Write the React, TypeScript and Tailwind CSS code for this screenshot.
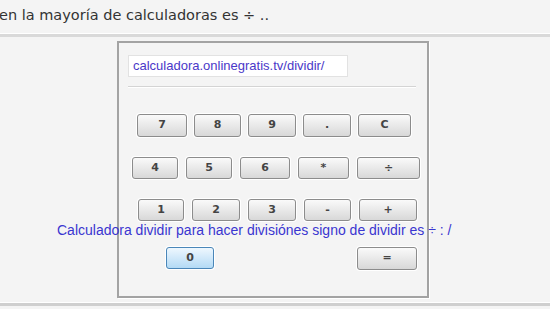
import React from 'react';

type Key = { label: string; w: number };

const rows: { ml: number; gap: number; h: number; keys: Key[] }[] = [
  { ml: 18, gap: 7, h: 23, keys: [{ label: '7', w: 50 }, { label: '8', w: 47 }, { label: '9', w: 48 }, { label: '.', w: 48 }, { label: 'C', w: 53 }] },
  { ml: 13, gap: 8, h: 22, keys: [{ label: '4', w: 46 }, { label: '5', w: 46 }, { label: '6', w: 50 }, { label: '*', w: 51 }, { label: '÷', w: 63 }] },
  { ml: 19, gap: 8, h: 22, keys: [{ label: '1', w: 46 }, { label: '2', w: 48 }, { label: '3', w: 48 }, { label: '-', w: 47 }, { label: '+', w: 58 }] },
];

function CalcKey({ label, w, h, blue }: { label: string; w: number; h: number; blue?: boolean }) {
  return (
    <button
      style={{ width: w, height: h }}
      className={
        blue
          ? 'rounded-[3px] border border-[#4a86b8] bg-gradient-to-b from-[#eef7fe] to-[#b3daf5] text-[11px] font-bold text-[#444] shadow-[0_0_0_1px_#fff] font-["DejaVu_Sans",sans-serif]'
          : 'rounded-[3px] border border-[#8c8c8c] bg-gradient-to-b from-[#fafafa] to-[#d8d8d8] text-[11px] font-bold text-[#444] shadow-[0_0_0_1px_#fff] font-["DejaVu_Sans",sans-serif]'
      }
    >
      {label}
    </button>
  );
}

export default function App() {
  return (
    <div className="w-[550px] h-[309px] overflow-hidden bg-[#f4f4f4]">
      <div className="h-[33px] pt-[6px] text-[14.5px] leading-[18px] text-[#333] font-['DejaVu_Sans',sans-serif] whitespace-nowrap -ml-[1px]">
        en la mayoría de calculadoras es ÷ ..
      </div>
      <div className="h-[1px] bg-white" />
      <div className="h-[3px] bg-[#d9d9d9]" />

      <div className="relative ml-[117px] mt-[4px] h-[257px] w-[312px] border-2 border-[#a3a3a3] shadow-[1px_1px_0_#fff]">
        <div className="ml-[9px] mt-[12px] flex h-[22px] w-[220px] items-center border border-[#e2e2e2] bg-white px-[4px] text-[13px] text-[#4a38c8] font-['Liberation_Sans',sans-serif]">
          calculadora.onlinegratis.tv/dividir/
        </div>
        <div className="ml-[9px] mt-[9px] h-[2px] w-[288px] border-t border-[#d4d4d4] bg-white" />

        <div className="mt-[26px] flex flex-col gap-[20px]">
          {rows.map((r, i) => (
            <div key={i} className="flex" style={{ marginLeft: r.ml, gap: r.gap }}>
              {r.keys.map((k) => (
                <CalcKey key={k.label} label={k.label} w={k.w} h={r.h} />
              ))}
            </div>
          ))}
          <div className="mt-[2px] flex">
            <div className="ml-[47px]">
              <CalcKey label="0" w={48} h={22} blue />
            </div>
            <div className="ml-[143px]">
              <CalcKey label="=" w={60} h={23} />
            </div>
          </div>
        </div>

        <div className="absolute left-[-62px] top-[179px] whitespace-nowrap text-[14px] leading-[16px] text-[#3a36d0] font-['Liberation_Sans',sans-serif]">
          Calculadora dividir para hacer divisiónes signo de dividir es ÷ : /
        </div>
      </div>

      <div className="mt-[4px] h-[1px] bg-white" />
      <div className="h-[3px] bg-[#cfcfcf]" />
    </div>
  );
}
